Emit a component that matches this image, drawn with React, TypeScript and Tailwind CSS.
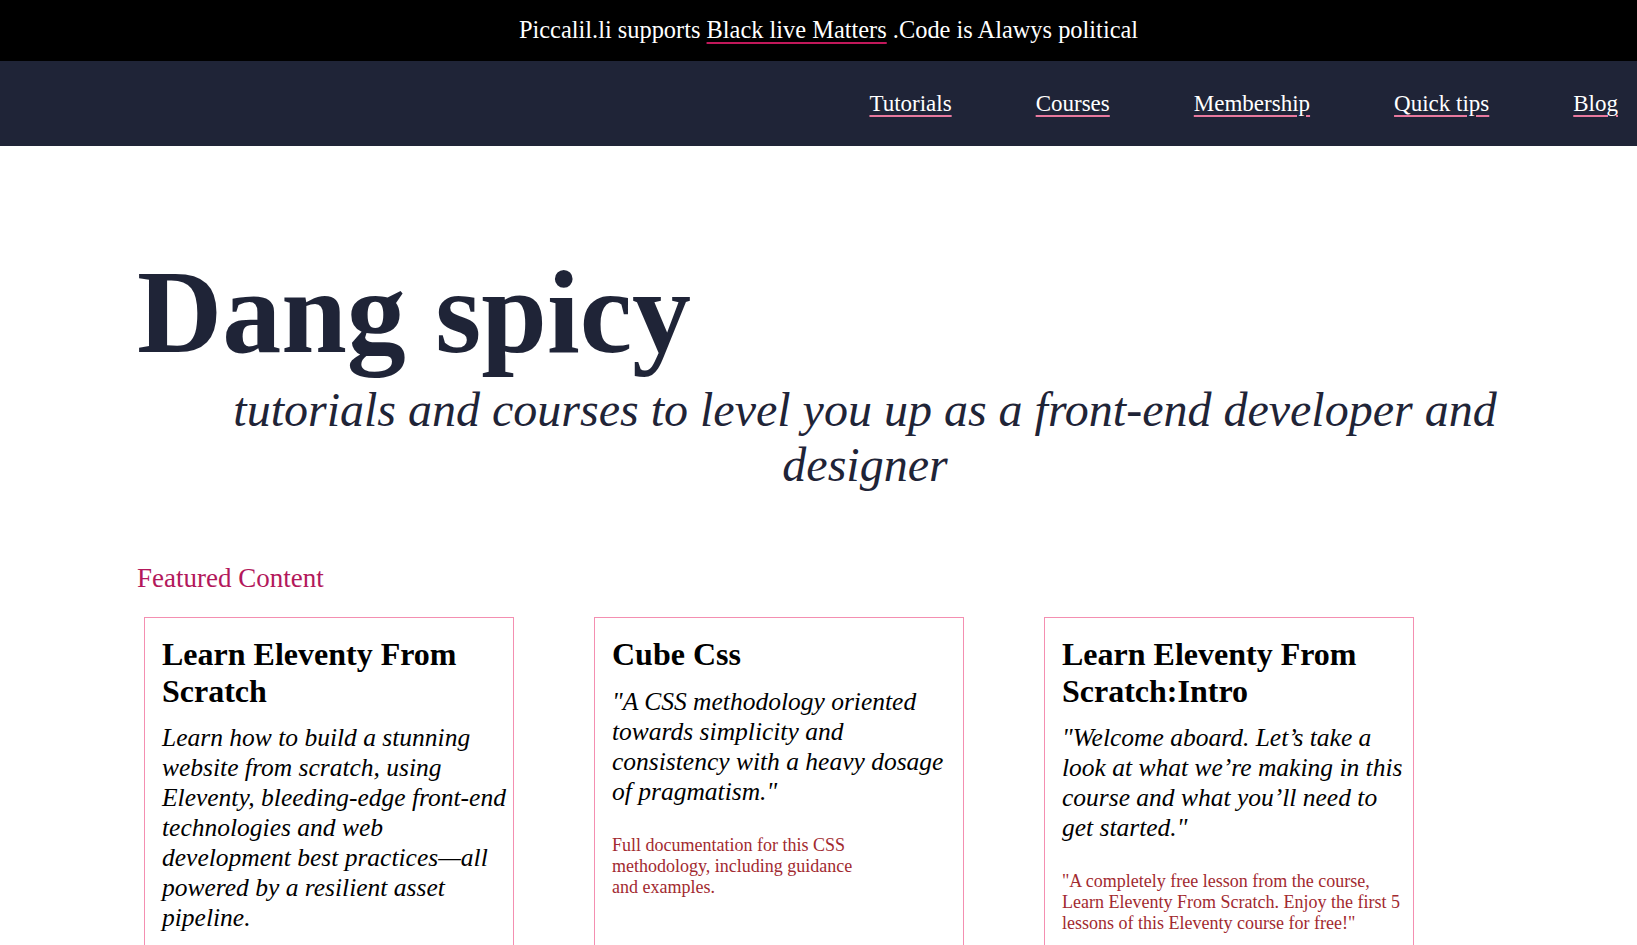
import React from 'react';

type Card = {
  title: string[];
  quote: string[];
  note: string[];
};

const navLinks = ['Tutorials', 'Courses', 'Membership', 'Quick tips', 'Blog'];

const cards: Card[] = [
  {
    title: ['Learn Eleventy From', 'Scratch'],
    quote: [
      'Learn how to build a stunning',
      'website from scratch, using',
      'Eleventy, bleeding-edge front-end',
      'technologies and web',
      'development best practices\u2014all',
      'powered by a resilient asset',
      'pipeline.',
    ],
    note: [],
  },
  {
    title: ['Cube Css'],
    quote: [
      '"A CSS methodology oriented',
      'towards simplicity and',
      'consistency with a heavy dosage',
      'of pragmatism."',
    ],
    note: ['Full documentation for this CSS', 'methodology, including guidance', 'and examples.'],
  },
  {
    title: ['Learn Eleventy From', 'Scratch:Intro'],
    quote: [
      '"Welcome aboard. Let\u2019s take a',
      'look at what we\u2019re making in this',
      'course and what you\u2019ll need to',
      'get started."',
    ],
    note: [
      '"A completely free lesson from the course,',
      'Learn Eleventy From Scratch. Enjoy the first 5',
      'lessons of this Eleventy course for free!"',
    ],
  },
];

function Lines({ lines }: { lines: string[] }) {
  return (
    <>
      {lines.map((l, i) => (
        <span key={i} className="block whitespace-nowrap">
          {l}
        </span>
      ))}
    </>
  );
}

function FeatureCard({ card }: { card: Card }) {
  return (
    <article className="w-[370px] border border-[#f48fb1] pl-[17px] pr-[6px] pt-[18px] pb-[60px] text-black">
      <h3 className="text-[32px] font-bold leading-[36.5px]">
        <Lines lines={card.title} />
      </h3>
      <p className="mt-[14px] text-[25.5px] italic leading-[30px]">
        <Lines lines={card.quote} />
      </p>
      {card.note.length > 0 && (
        <p className="mt-[28px] text-[18px] leading-[21px] text-[#a22a30]">
          <Lines lines={card.note} />
        </p>
      )}
    </article>
  );
}

export default function App() {
  return (
    <div className="min-h-screen bg-white font-['Liberation_Serif','Times_New_Roman',serif]">
      {/* banner */}
      <div className="flex h-[61px] items-center justify-center bg-black pl-[20px] text-[24.4px] text-white">
        <p>
          Piccalil.li supports{' '}
          <a href="#" className="underline decoration-[#c2185b] decoration-2 underline-offset-[4px]">
            Black live Matters
          </a>{' '}
          .Code is Alawys political
        </p>
      </div>

      {/* nav */}
      <nav className="flex h-[85px] items-center justify-end gap-[84px] bg-[#1f2437] pr-[19px] pt-[2px] text-[23px] text-white">
        {navLinks.map((link) => (
          <a
            key={link}
            href="#"
            className="underline decoration-[#e8799e] decoration-2 underline-offset-[4px]"
          >
            {link}
          </a>
        ))}
      </nav>

      <main className="pl-[137px]">
        <h1 className="mt-[108px] text-[118px] font-bold leading-[118px] text-[#1f2437]">Dang spicy</h1>
        <p className="mt-[10px] pr-[44px] text-center text-[48px] italic leading-[55px] text-[#1f2437]">
          tutorials and courses to level you up as a front-end developer and
          <br />
          designer
        </p>

        <section className="mt-[71px]">
          <h2 className="text-[27px] leading-[31px] text-[#b3185b]">Featured Content</h2>
          <div className="ml-[7px] mt-[23px] flex items-stretch gap-[80px]">
            {cards.map((card, i) => (
              <FeatureCard key={i} card={card} />
            ))}
          </div>
        </section>
      </main>
    </div>
  );
}
